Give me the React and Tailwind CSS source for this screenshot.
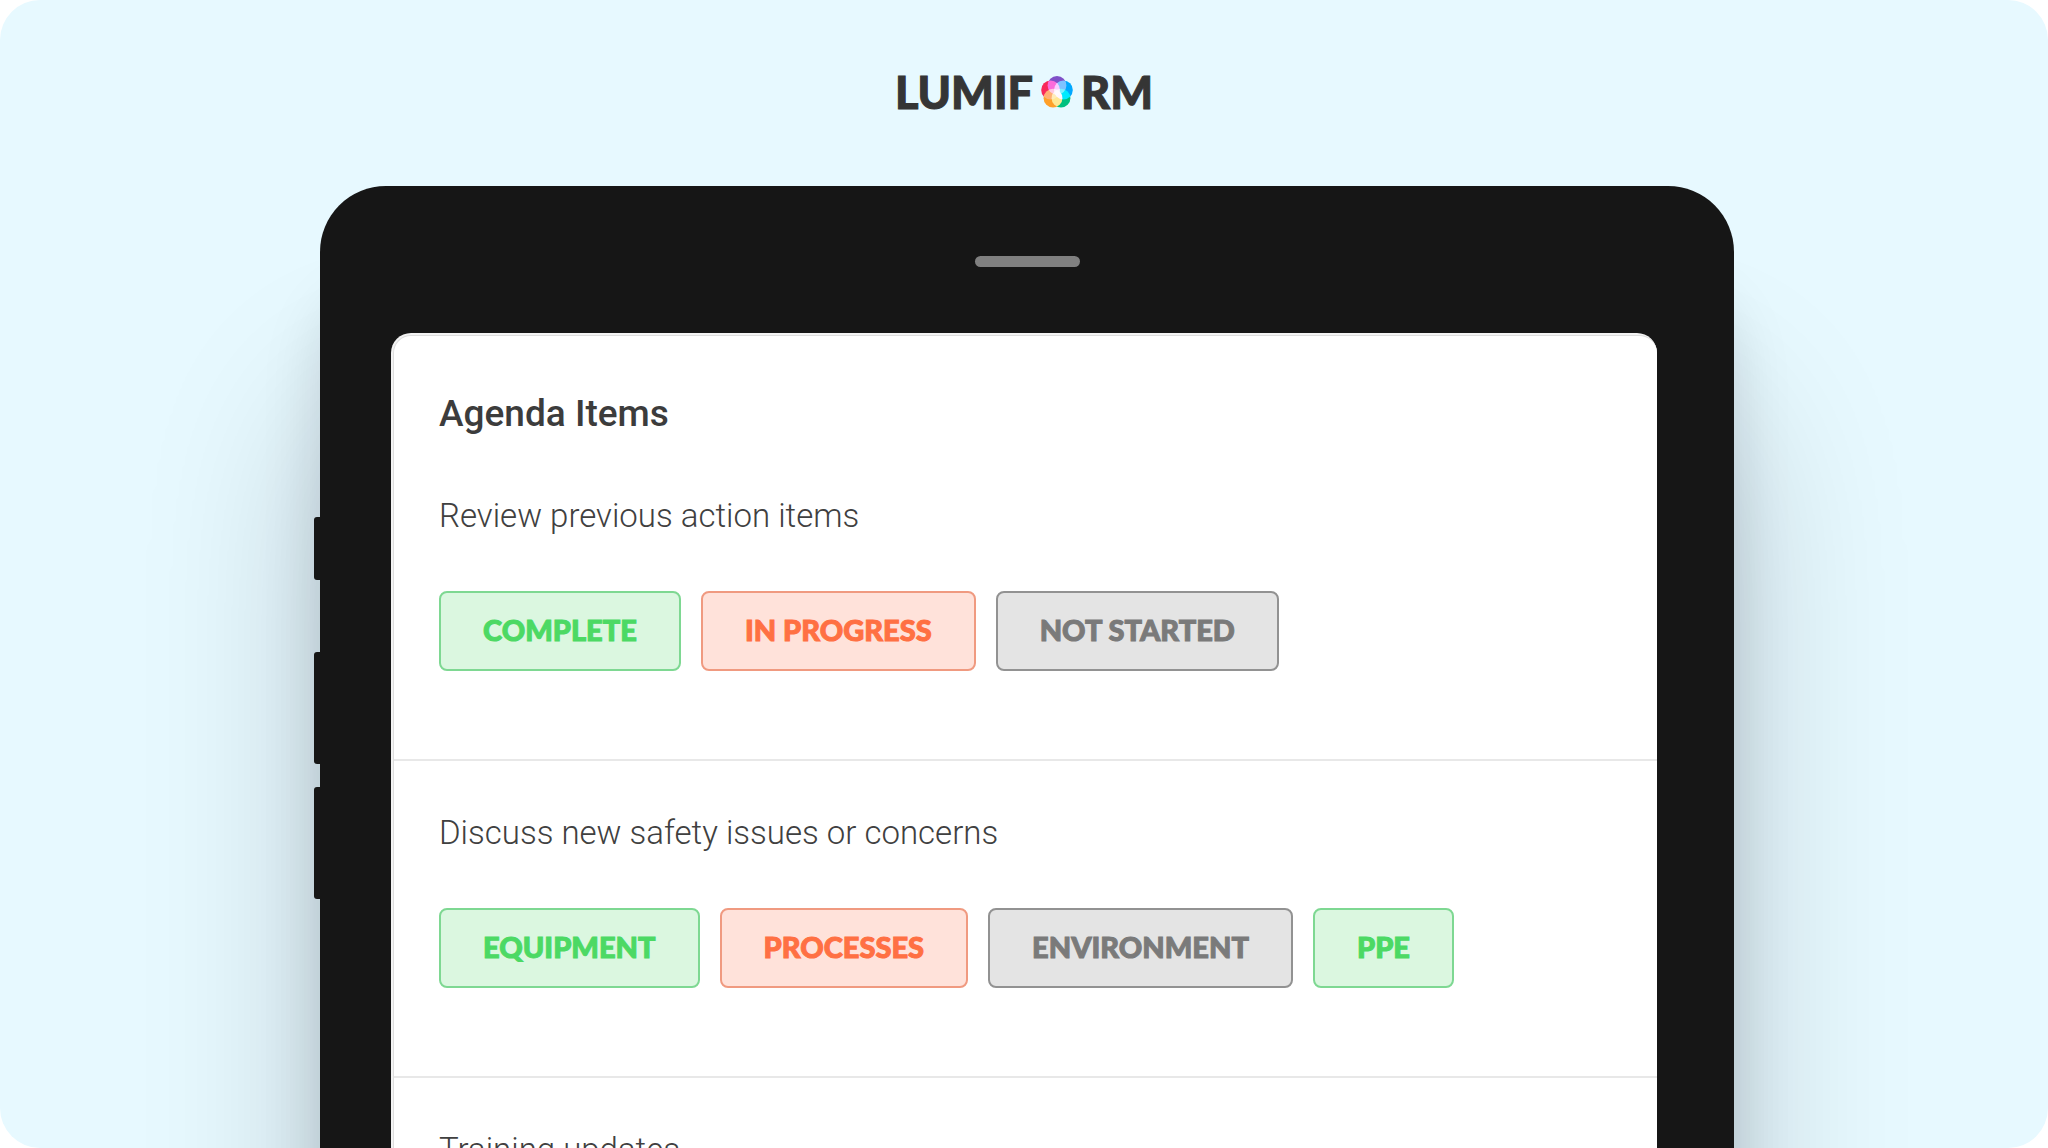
import React from 'react';

const sections = [
  {
    id: 1,
    title: 'Review previous action items',
    options: [
      { label: 'COMPLETE', color: 'green' },
      { label: 'IN PROGRESS', color: 'orange' },
      { label: 'NOT STARTED', color: 'gray' },
    ],
  },
  {
    id: 2,
    title: 'Discuss new safety issues or concerns',
    options: [
      { label: 'EQUIPMENT', color: 'green' },
      { label: 'PROCESSES', color: 'orange' },
      { label: 'ENVIRONMENT', color: 'gray' },
      { label: 'PPE', color: 'green' },
    ],
  },
  { id: 3, title: 'Training updates', options: [] },
];

const optionColors = {
  green: 'bg-[#dbf7e0] border-[#7ed892] text-[#4cd964]',
  orange: 'bg-[#ffe2da] border-[#f09a80] text-[#ff7043]',
  gray: 'bg-[#e4e4e4] border-[#929292] text-[#7a7a7a]',
};

// Five overlapping petals, lighter wherever they cross
function LogoMark() {
  return (
    <svg viewBox="0 0 32 32" className="w-8 h-8 isolate" aria-hidden="true">
      <circle className="mix-blend-screen" cx="16" cy="9.4" r="9.4" fill="#7f50c8" />
      <circle className="mix-blend-screen" cx="22.4" cy="14" r="9.4" fill="#00a8ff" />
      <circle className="mix-blend-screen" cx="20" cy="22.2" r="9.4" fill="#00c07f" />
      <circle className="mix-blend-screen" cx="12" cy="22.2" r="9.4" fill="#ffa028" />
      <circle className="mix-blend-screen" cx="9.6" cy="14" r="9.4" fill="#f8285a" />
    </svg>
  );
}

function Logo() {
  return (
    <div className="flex items-center justify-center gap-2 h-12 font-['Lato',sans-serif] font-black text-[45px] leading-[48px] text-[#353535] [-webkit-text-stroke:1px_currentColor]">
      <span>LUMIF</span>
      <LogoMark />
      <span>RM</span>
    </div>
  );
}

function Section({ title, options }) {
  return (
    <section className="pl-[45px] pr-8 pt-[50px] pb-[88px] border-b-2 border-[#e8e8e8] last:border-b-0 last:pb-96">
      <h2 className="text-[33px] leading-[44px] font-light text-[#404040]">{title}</h2>
      <div className="flex flex-wrap gap-5 mt-[53px]">
        {options.map((option) => (
          <button
            key={option.label}
            type="button"
            className={`h-20 px-[42px] pb-[2px] rounded-lg border-2 font-['Lato',sans-serif] font-black text-[29px] leading-9 [-webkit-text-stroke:1px_currentColor] ${optionColors[option.color]}`}
          >
            {option.label}
          </button>
        ))}
      </div>
    </section>
  );
}

function App() {
  return (
    <div className="h-screen overflow-hidden rounded-[40px] bg-[#e7f9ff] font-['Roboto',sans-serif]">
      <header className="pt-[68px] pb-[70px]">
        <Logo />
      </header>

      {/* Tablet */}
      <main className="relative ml-80 mr-[314px] pt-[70px] rounded-t-[66px] bg-[#161616] shadow-[0_220px_180px_rgba(0,10,20,0.2),0_110px_60px_rgba(0,10,20,0.13)]">
        <div className="absolute -left-[6px] top-[331px] w-2 h-[63px] rounded-l-[3px] bg-[#161616]" />
        <div className="absolute -left-[6px] top-[466px] w-2 h-[112px] rounded-l-[3px] bg-[#161616]" />
        <div className="absolute -left-[6px] top-[601px] w-2 h-[112px] rounded-l-[3px] bg-[#161616]" />
        <div className="mx-auto w-[105px] h-[11px] rounded-full bg-[#808080]" />

        {/* Screen */}
        <div className="mt-[66px] ml-[71px] mr-[77px] pt-[2px] pl-[2px] rounded-t-[20px] bg-[#f3f3f3]">
          <div className="border-t border-l border-[#dddddd] rounded-t-[18px] bg-white">
            <h1 className="pl-[45px] pt-[54px] pb-[6px] text-[37px] leading-[48px] font-medium text-[#3c3c3c]">Agenda Items</h1>
            {sections.map((section) => (
              <Section key={section.id} title={section.title} options={section.options} />
            ))}
          </div>
        </div>
      </main>
    </div>
  );
}

export default App;
